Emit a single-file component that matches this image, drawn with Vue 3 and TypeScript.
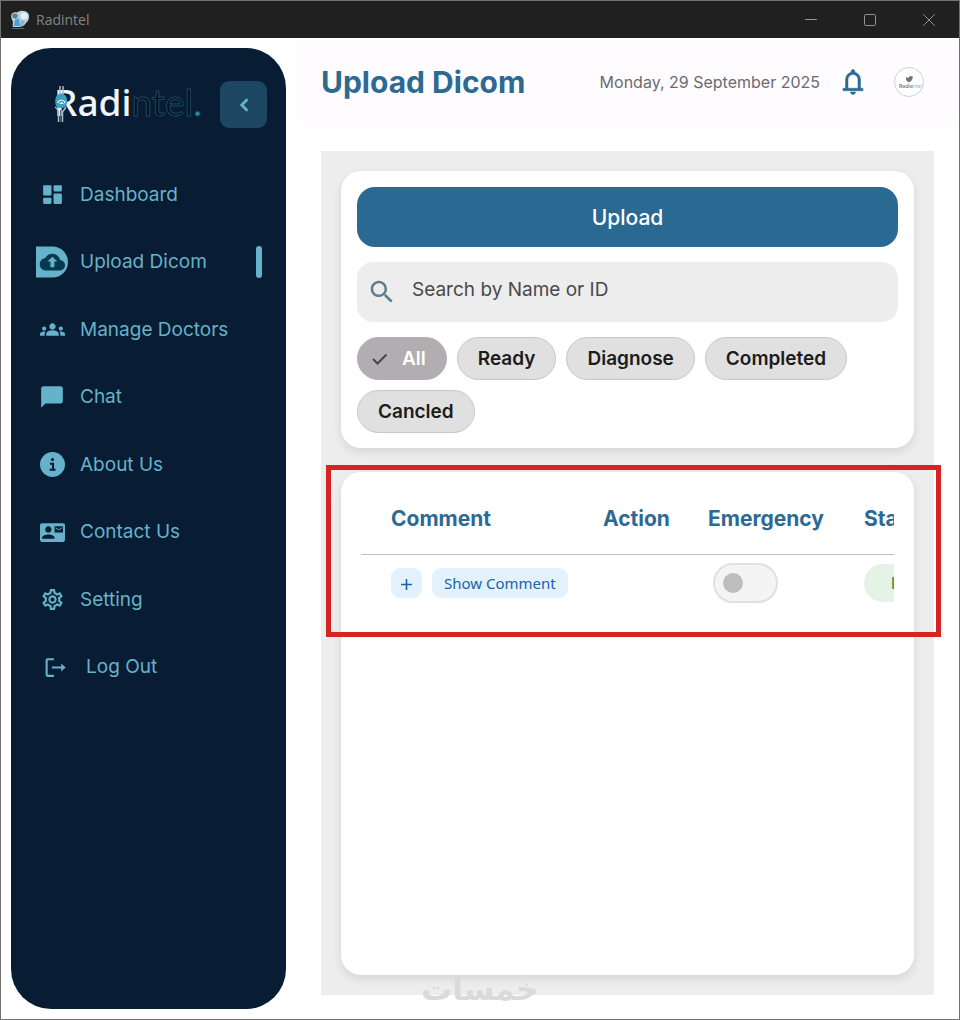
<script setup lang="ts">
import { ref } from 'vue'

interface NavItem {
  label: string
  icon: string
  size: number
}

const navItems: NavItem[] = [
  { label: 'Dashboard', icon: 'dashboard', size: 25 },
  { label: 'Upload Dicom', icon: 'upload', size: 32 },
  { label: 'Manage Doctors', icon: 'groups', size: 25 },
  { label: 'Chat', icon: 'chat', size: 26 },
  { label: 'About Us', icon: 'about', size: 25 },
  { label: 'Contact Us', icon: 'contact', size: 25 },
  { label: 'Setting', icon: 'setting', size: 25 },
  { label: 'Log Out', icon: 'logout', size: 25 },
]
const activeItem = ref('Upload Dicom')

const filters: string[] = ['All', 'Ready', 'Diagnose', 'Completed', 'Cancled']
const activeFilter = ref('All')

const query = ref('')
const emergency = ref(false)

const iconPaths: Record<string, string> = {
  groups:
    'M12 12.75c1.63 0 3.07.39 4.24.9 1.08.48 1.76 1.56 1.76 2.73V18H6v-1.61c0-1.18.68-2.26 1.76-2.73 1.17-.52 2.61-.91 4.24-.91zM4 13c1.1 0 2-.9 2-2s-.9-2-2-2-2 .9-2 2 .9 2 2 2zm1.13 1.1c-.37-.06-.74-.1-1.13-.1-.99 0-1.93.21-2.78.58C.48 14.9 0 15.62 0 16.43V18h4.5v-1.61c0-.83.23-1.61.63-2.29zM20 13c1.1 0 2-.9 2-2s-.9-2-2-2-2 .9-2 2 .9 2 2 2zm4 3.43c0-.81-.48-1.53-1.22-1.85-.85-.37-1.79-.58-2.78-.58-.39 0-.76.04-1.13.1.4.68.63 1.46.63 2.29V18H24v-1.57zM12 6c1.66 0 3 1.34 3 3s-1.34 3-3 3-3-1.34-3-3 1.34-3 3-3z',
  chat: 'M20 2H4c-1.1 0-2 .9-2 2v18l4-4h14c1.1 0 2-.9 2-2V4c0-1.1-.9-2-2-2z',
  contact:
    'M21 8V7l-3 2-3-2v1l3 2 3-2zm1-5H2C.9 3 0 3.9 0 5v14c0 1.1.9 2 2 2h20c1.1 0 1.99-.9 1.99-2L24 5c0-1.1-.9-2-2-2zM8 6c1.66 0 3 1.34 3 3s-1.34 3-3 3-3-1.34-3-3 1.34-3 3-3zm6 12H2v-1c0-2 4-3.1 6-3.1s6 1.1 6 3.1v1zm8-6h-8V6h8v6z',
  setting:
    'M19.43 12.98c.04-.32.07-.64.07-.98 0-.34-.03-.66-.07-.98l2.11-1.65c.19-.15.24-.42.12-.64l-2-3.46c-.09-.16-.26-.25-.44-.25-.06 0-.12.01-.17.03l-2.49 1c-.52-.4-1.08-.73-1.69-.98l-.38-2.65C14.46 2.18 14.25 2 14 2h-4c-.25 0-.46.18-.49.42l-.38 2.65c-.61.25-1.17.59-1.69.98l-2.49-1c-.06-.02-.12-.03-.18-.03-.17 0-.34.09-.43.25l-2 3.46c-.13.22-.07.49.12.64l2.11 1.65c-.04.32-.07.65-.07.98 0 .33.03.66.07.98l-2.11 1.65c-.19.15-.24.42-.12.64l2 3.46c.09.16.26.25.44.25.06 0 .12-.01.17-.03l2.49-1c.52.4 1.08.73 1.69.98l.38 2.65c.03.24.24.42.49.42h4c.25 0 .46-.18.49-.42l.38-2.65c.61-.25 1.17-.59 1.69-.98l2.49 1c.06.02.12.03.18.03.17 0 .34-.09.43-.25l2-3.46c.12-.22.07-.49-.12-.64l-2.11-1.65zm-1.98-1.71c.04.31.05.52.05.73 0 .21-.02.43-.05.73l-.14 1.13.89.7 1.08.84-.7 1.21-1.27-.51-1.04-.42-.9.68c-.43.32-.84.56-1.25.73l-1.06.43-.16 1.13-.2 1.35h-1.4l-.19-1.35-.16-1.13-1.06-.43c-.43-.18-.83-.41-1.23-.71l-.91-.7-1.06.43-1.27.51-.7-1.21 1.08-.84.89-.7-.14-1.13c-.03-.31-.05-.54-.05-.74s.02-.43.05-.73l.14-1.13-.89-.7-1.08-.84.7-1.21 1.27.51 1.04.42.9-.68c.43-.32.84-.56 1.25-.73l1.06-.43.16-1.13.2-1.35h1.39l.19 1.35.16 1.13 1.06.43c.43.18.83.41 1.23.71l.91.7 1.06-.43 1.27-.51.7 1.21-1.07.85-.89.7.14 1.13zM12 8c-2.21 0-4 1.79-4 4s1.79 4 4 4 4-1.79 4-4-1.79-4-4-4zm0 6c-1.1 0-2-.9-2-2s.9-2 2-2 2 .9 2 2-.9 2-2 2z',
}
</script>

<template>
  <div class="window">
    <div class="titlebar">
      <svg class="app-icon" width="20" height="20" viewBox="0 0 20 20" aria-hidden="true">
        <path d="M1 6C1 3 4 1.500 7 2.500C10 0 15 0 18 3C20 6 19 11 16 13C14 16 11 17 9 17H3C2 15 4 12 2 10Z" fill="#b9d3de" />
        <path d="M2 5C4 3 7 3 8 6L6 9L3 8Z" fill="#5d7f8e" />
        <circle cx="14" cy="6" r="3.500" fill="#e4eef2" />
        <path d="M5 10L9 8L10 16H4Z" fill="#3fa6d8" />
        <path d="M11 10L15 11L12 16H10Z" fill="#8fb0bd" />
        <path d="M2 18.500H14" stroke="#3f6a7c" />
      </svg>
      <span class="app-name">Radintel</span>
      <div class="window-controls">
        <button type="button" aria-label="Minimize">
          <svg width="12" height="12" viewBox="0 0 12 12"><path d="M0 5.500H12" /></svg>
        </button>
        <button type="button" aria-label="Maximize">
          <svg width="12" height="12" viewBox="0 0 12 12"><rect x=".5" y=".5" width="11" height="11" rx="1" /></svg>
        </button>
        <button type="button" aria-label="Close">
          <svg width="12" height="12" viewBox="0 0 12 12"><path d="M.3 .3L11.700 11.700M11.700 .3L.3 11.700" /></svg>
        </button>
      </div>
    </div>

    <div class="body">
      <aside class="sidebar">
        <div class="brand">
          <div class="logo">
            <span class="logo-light">Radi</span><span class="logo-dark">ntel<span class="logo-dot">.</span></span>
            <svg class="logo-bone" width="16" height="38" viewBox="0 0 16 38" aria-hidden="true">
              <path d="M6 1V10M9 1V10" stroke="#a9bcc8" stroke-width="1.500" />
              <path d="M3 10Q8 7 12 11Q15 18 11 22Q6 25 2 21Q0 15 3 10Z" fill="#3a9fc0" />
              <path d="M3 17Q7 12 12 17Q8 21 3 17Z" fill="#d9f4fb" />
              <path d="M5 17.500Q7.500 15 10 17.500" fill="none" stroke="#1b4f68" />
              <path d="M1 22Q5 25 4.500 28V37M8.500 37V27L12 22" fill="none" stroke="#a9bcc8" stroke-width="1.500" />
              <path d="M6.500 25V37" stroke="#4d6a7c" />
            </svg>
          </div>
          <button type="button" class="collapse" aria-label="Collapse menu">
            <svg width="28" height="28" viewBox="0 0 24 24">
              <path d="M15 7L10 12L15 17" fill="none" stroke="currentColor" stroke-width="2.400" />
            </svg>
          </button>
        </div>

        <nav class="nav">
          <a
            v-for="item in navItems"
            :key="item.label"
            href="#"
            class="nav-link"
            :class="{ active: item.label === activeItem, indented: item.icon === 'logout' }"
            @click.prevent="activeItem = item.label"
          >
            <span class="nav-icon">
              <svg :width="item.size" :height="item.size" viewBox="0 0 24 24" fill="currentColor" aria-hidden="true">
                <template v-if="item.icon === 'dashboard'">
                  <rect x="3" y="3" width="8" height="10" rx="1" />
                  <rect x="3" y="15" width="8" height="6" rx="1" />
                  <rect x="13" y="3" width="8" height="6" rx="1" />
                  <rect x="13" y="11" width="8" height="10" rx="1" />
                </template>
                <template v-else-if="item.icon === 'upload'">
                  <path d="M0 .3H12.300A11.700 11.700 0 0 1 12.300 23.700H0Z" />
                  <path
                    transform="translate(2.800 2.600) scale(.79)"
                    fill="#063a50"
                    d="M19.350 10.040C18.670 6.590 15.640 4 12 4 9.110 4 6.600 5.640 5.350 8.040 2.340 8.360 0 10.910 0 14c0 3.310 2.690 6 6 6h13c2.760 0 5-2.240 5-5 0-2.640-2.050-4.780-4.650-4.960z"
                  />
                  <path d="M12.300 8L16 11.700H13.800V15.900H10.800V11.700H8.600Z" />
                </template>
                <template v-else-if="item.icon === 'about'">
                  <circle cx="12" cy="12" r="12" />
                  <circle cx="12" cy="7.300" r="1.500" fill="#081c33" />
                  <path d="M9.500 11.200H12.500V17M9.300 17H14.900" fill="none" stroke="#081c33" stroke-width="2" />
                </template>
                <template v-else-if="item.icon === 'logout'">
                  <path
                    d="M10.500 4H4.500Q3.500 4 3.500 5V19Q3.500 20 4.500 20H10.500"
                    fill="none"
                    stroke="currentColor"
                    stroke-width="2"
                  />
                  <path d="M8.500 11.100H17.500V8.200L21.700 12L17.500 15.800V12.900H8.500Z" />
                </template>
                <path v-else :d="iconPaths[item.icon]" />
              </svg>
            </span>
            <span class="nav-label">{{ item.label }}</span>
            <span v-if="item.label === activeItem" class="nav-marker"></span>
          </a>
        </nav>
      </aside>

      <main class="main">
        <header class="header">
          <h1>Upload Dicom</h1>
          <time datetime="2025-09-29">Monday, 29 September 2025</time>
          <button type="button" class="bell" aria-label="Notifications">
            <svg width="30" height="30" viewBox="0 0 24 24">
              <path
                fill="currentColor"
                stroke="currentColor"
                stroke-width=".4"
                d="M4 19v-2h2v-7q0-2.075 1.250-3.687T10.500 4.200v-.7q0-.625.438-1.062T12 2t1.063.438T13.500 3.500v.7q2 .5 3.250 2.113T18 10v7h2v2zM12 22q-.825 0-1.412-.587T10 20h4q0 .825-.587 1.413T12 22m-4-5h8v-7q0-1.650-1.175-2.825T12 6T9.175 7.175T8 10z"
              />
            </svg>
          </button>
          <button type="button" class="avatar" aria-label="Profile">
            <svg width="30" height="30" viewBox="0 0 30 30">
              <circle cx="15" cy="15" r="14.500" fill="#fff" stroke="#c9d2d4" />
              <path d="M12 10L14 11L16 9L19 9.500L18 13L16 15H14L12 13Z" fill="#6f7478" />
              <text x="5" y="21" font-size="5" font-weight="700" fill="#85888c">Radio</text>
              <text x="18" y="21" font-size="5" fill="#8dbbe0">intel</text>
            </svg>
          </button>
        </header>

        <section class="content">
          <div class="card controls">
            <button type="button" class="upload">Upload</button>
            <label class="search">
              <svg width="30" height="30" viewBox="0 0 24 24" aria-hidden="true">
                <path
                  fill="currentColor"
                  d="M15.500 14h-.79l-.28-.27C15.410 12.590 16 11.110 16 9.500 16 5.910 13.090 3 9.500 3S3 5.910 3 9.500 5.910 16 9.500 16c1.610 0 3.090-.59 4.230-1.570l.27.28v.79l5 4.990L20.490 19l-4.990-5zm-6 0C7.010 14 5 11.990 5 9.500S7.010 5 9.500 5 14 7.010 14 9.500 11.990 14 9.500 14z"
                />
              </svg>
              <input v-model="query" type="text" placeholder="Search by Name or ID" aria-label="Search by Name or ID" />
            </label>
            <div class="chips">
              <button
                v-for="filter in filters"
                :key="filter"
                type="button"
                class="chip"
                :class="{ selected: filter === activeFilter }"
                :aria-pressed="filter === activeFilter"
                @click="activeFilter = filter"
              >
                <svg v-if="filter === activeFilter" width="16" height="12" viewBox="0 0 16 12" aria-hidden="true">
                  <path d="M1 6L5.500 10.500L14.500 1.500" fill="none" stroke="#49454f" stroke-width="2" />
                </svg>
                {{ filter }}
              </button>
            </div>
          </div>

          <div class="card results">
            <div class="table-scroll">
              <table>
                <colgroup>
                  <col class="col-comment" />
                  <col class="col-action" />
                  <col class="col-emergency" />
                  <col class="col-status" />
                </colgroup>
                <thead>
                  <tr>
                    <th scope="col">Comment</th>
                    <th scope="col">Action</th>
                    <th scope="col">Emergency</th>
                    <th scope="col">Status</th>
                  </tr>
                </thead>
                <tbody>
                  <tr>
                    <td>
                      <div class="comment-actions">
                        <button type="button" class="tonal add" aria-label="Add comment">
                          <svg width="11" height="11" viewBox="0 0 11 11">
                            <path d="M5.500 0V11M0 5.500H11" stroke="currentColor" stroke-width="1.600" />
                          </svg>
                        </button>
                        <button type="button" class="tonal">Show Comment</button>
                      </div>
                    </td>
                    <td></td>
                    <td>
                      <input v-model="emergency" type="checkbox" role="switch" class="switch" aria-label="Emergency" />
                    </td>
                    <td><span class="status">Ready</span></td>
                  </tr>
                </tbody>
              </table>
            </div>
            <div class="highlight"></div>
          </div>
          <span class="watermark" lang="ar" dir="rtl">خمسات</span>
        </section>
      </main>
    </div>
  </div>
</template>

<style>
body {
  margin: 0;
  background: #fff;
}
</style>

<style scoped>
* {
  box-sizing: border-box;
}

.window {
  display: flex;
  flex-direction: column;
  min-height: 100vh;
  border: 1px solid #707270;
  background: #fff;
  font-family: Inter, 'Open Sans', sans-serif;
  overflow: hidden;
}

button {
  margin: 0;
  padding: 0;
  border: 0;
  background: none;
  font: inherit;
  color: inherit;
  cursor: pointer;
}

svg {
  display: block;
}

.titlebar {
  display: flex;
  align-items: center;
  height: 37px;
  padding: 0 1px 0 9px;
  background: #202020;
  color: #858585;
}

.app-name {
  margin-left: 6px;
  font: 14px/20px 'Open Sans', 'Noto Sans', sans-serif;
}

.window-controls {
  display: flex;
  align-self: stretch;
  margin-left: auto;
}

.window-controls button {
  display: grid;
  place-items: center;
  width: 59px;
}

.window-controls svg {
  fill: none;
  stroke: #929292;
}

.body {
  flex: 1;
  display: flex;
}

.sidebar {
  width: 275px;
  flex: none;
  margin: 10px;
  border-radius: 40px;
  background: #081c33;
  color: #66b2ca;
}

.brand {
  display: flex;
  align-items: center;
  justify-content: space-between;
  height: 113px;
  padding: 0 19px 0 43px;
}

.logo {
  position: relative;
  padding-bottom: 6px;
  font: 500 37px/48px 'Noto Sans', 'Open Sans', sans-serif;
  white-space: nowrap;
}

.logo-light {
  color: #f3f5fa;
}

.logo-dark {
  font-family: Lato, 'Noto Sans', sans-serif;
  font-weight: 400;
  color: #04101f;
  -webkit-text-stroke: 1px #174a60;
}

.logo-dot {
  color: #2f8fae;
}

.logo-bone {
  position: absolute;
  left: 0;
  top: 7px;
}

.collapse {
  display: grid;
  place-items: center;
  width: 47px;
  height: 47px;
  border-radius: 9px;
  background: #1d4663;
}

.nav {
  display: grid;
  grid-auto-rows: 1fr;
  height: 540px;
}

.nav-link {
  display: flex;
  align-items: center;
  padding: 0 24px;
  color: inherit;
  font-size: 19px;
  line-height: 28px;
  text-decoration: none;
}

.nav-icon {
  display: grid;
  place-items: center;
  width: 34px;
  margin-right: 11px;
}

.indented .nav-icon {
  margin-left: 3px;
  margin-right: 14px;
}

.nav-marker {
  width: 6px;
  height: 32px;
  margin-left: auto;
  border-radius: 3px;
  background: #66b2ca;
}

.main {
  flex: 1;
  min-width: 0;
  display: flex;
  flex-direction: column;
}

.header {
  display: flex;
  align-items: center;
  height: 88px;
  padding: 0 35px 0 25px;
  border-radius: 10px;
  background: #fefcff;
}

h1 {
  flex: 1;
  margin: 0;
  color: #2d6a93;
  font-size: 30px;
  font-weight: 700;
  line-height: 40px;
  white-space: nowrap;
}

time {
  color: #6c6a6f;
  font-size: 16px;
  line-height: 24px;
  white-space: nowrap;
}

.bell {
  margin: 0 26px 0 18px;
  color: #2b6a92;
}

.content {
  position: relative;
  flex: 1;
  display: flex;
  flex-direction: column;
  gap: 24px;
  margin: 25px 25px 24px 25px;
  padding: 20px;
  background: #ededed;
}

.card {
  border-radius: 20px;
  background: #fff;
  box-shadow: 0 4px 10px rgba(0, 0, 0, 0.1);
}

.controls {
  display: flex;
  flex-direction: column;
  gap: 15px;
  padding: 16px 16px 15px;
}

.upload {
  height: 60px;
  border-radius: 18px;
  background: #2a6991;
  color: #fff;
  font-size: 21px;
  font-weight: 500;
}

.search {
  display: flex;
  align-items: center;
  height: 60px;
  padding: 0 16px 0 10px;
  border-radius: 16px;
  background: #ededed;
  color: #5d7d8e;
}

.search input {
  flex: 1;
  min-width: 0;
  margin-left: 15px;
  padding: 0 0 4px;
  border: 0;
  outline: 0;
  background: none;
  color: #49484c;
  font: 19px/28px Inter, 'Open Sans', sans-serif;
}

.search input::placeholder {
  color: #49484c;
  opacity: 1;
}

.chips {
  display: flex;
  flex-wrap: wrap;
  gap: 10px;
}

.chip {
  display: flex;
  align-items: center;
  height: 43px;
  padding: 0 20px;
  border: 1px solid #cac4d0;
  border-radius: 22px;
  background: #e0e0e0;
  color: #1c1c1c;
  font-size: 19px;
  font-weight: 600;
}

.chip.selected {
  gap: 14px;
  padding: 0 20px 0 14px;
  border-color: #b1adb1;
  background: #b1adb1;
  color: #fff;
}

.results {
  position: relative;
  flex: 1;
  padding: 11px 20px 20px;
}

.table-scroll {
  overflow-x: auto;
  scrollbar-width: none;
}

table {
  width: 634px;
  table-layout: fixed;
  border-collapse: collapse;
}

.col-comment {
  width: 223px;
}

.col-action {
  width: 105px;
}

.col-emergency {
  width: 156px;
}

.col-status {
  width: 150px;
}

th,
td {
  padding: 0 0 0 19px;
  text-align: left;
  white-space: nowrap;
}

th:first-child,
td:first-child {
  padding-left: 30px;
}

thead tr {
  height: 71px;
  border-bottom: 1px solid #bdbdbd;
}

tbody tr {
  height: 58px;
}

th {
  color: #2d6a93;
  font-size: 21px;
  font-weight: 700;
}

.comment-actions {
  display: flex;
  gap: 10px;
}

.tonal {
  height: 30px;
  padding: 0 12px;
  border-radius: 9px;
  background: #e3f1fd;
  color: #1a62ae;
  font: 15px/30px 'Noto Sans', 'Open Sans', sans-serif;
}

.add {
  display: grid;
  place-items: center;
  width: 31px;
  padding: 2px 0 0;
}

.switch {
  appearance: none;
  display: flex;
  align-items: center;
  width: 65px;
  height: 40px;
  margin: 0 0 0 5px;
  padding: 0 8px;
  border: 2px solid #e0e0e0;
  border-radius: 20px;
  background: #f4f4f4;
}

.switch::before {
  content: '';
  width: 20px;
  height: 20px;
  border-radius: 50%;
  background: #bdbdbd;
}

.switch:checked {
  justify-content: flex-end;
}

.status {
  display: inline-block;
  padding: 0 27px;
  border-radius: 19px;
  background: #e5f3e7;
  color: #43a047;
  font-size: 16px;
  font-weight: 600;
  line-height: 38px;
}

.highlight {
  position: absolute;
  top: -7px;
  right: -27px;
  left: -15px;
  height: 172px;
  border: 5px solid #d62425;
  pointer-events: none;
}

.watermark {
  position: absolute;
  bottom: -14px;
  left: 100px;
  color: #dadada;
  font: 700 31px/40px 'DejaVu Sans', sans-serif;
  pointer-events: none;
}
</style>
